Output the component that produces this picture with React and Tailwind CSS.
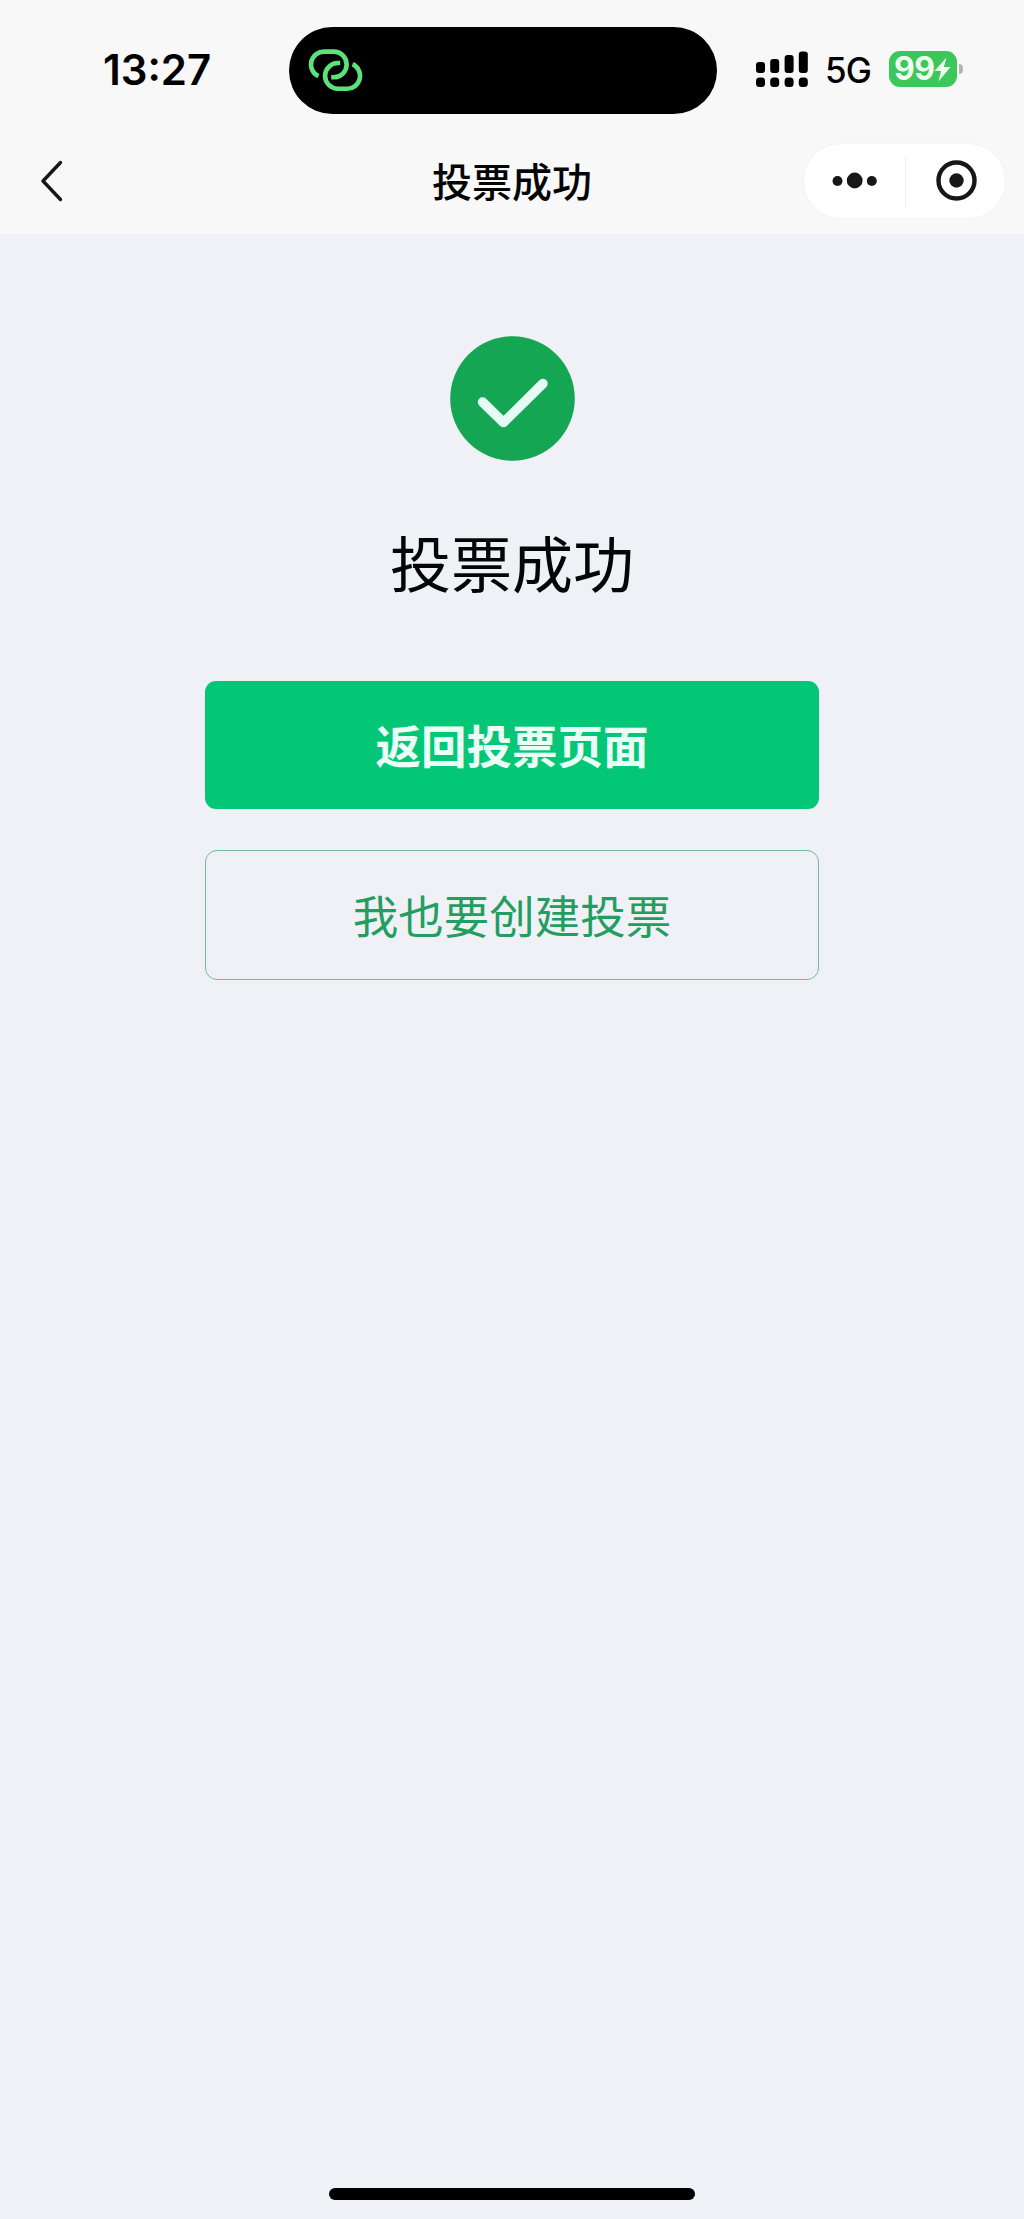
function LinkIcon() {
  return (
    <svg className="mb-[3px] ml-[15px] h-[50px] w-[60px]" viewBox="0 0 60 50" fill="none" stroke="#5ce27b" strokeWidth="4.6">
      <path d="M14.5 32.2A12.9 12.9 0 0 1 20.2 7.6H29.8A12.85 12.85 0 0 1 29.8 33.3H27.2" />
      <path d="M36.2 19H33.9A12.85 12.85 0 0 0 33.9 44.7H42.8A12.85 12.85 0 0 0 48.6 20.2" />
    </svg>
  );
}

function SignalIcon() {
  return (
    <svg className="h-9 w-[53px]" viewBox="0 0 53 36" fill="#000">
      <rect x="0" y="11" width="9" height="11" rx="3" />
      <rect x="14.2" y="8" width="9" height="14" rx="3" />
      <rect x="28.6" y="4" width="9" height="18" rx="3" />
      <rect x="42.8" y="0.5" width="9" height="21.5" rx="3" />
      <rect x="0" y="26.5" width="9" height="9.5" rx="3.5" />
      <rect x="14.2" y="26.5" width="9" height="9.5" rx="3.5" />
      <rect x="28.6" y="26.5" width="9" height="9.5" rx="3.5" />
      <rect x="42.8" y="26.5" width="9" height="9.5" rx="3.5" />
    </svg>
  );
}

function StatusBar() {
  return (
    <div className="flex h-[141px] items-start font-['Inter',sans-serif] text-black">
      <div className="mt-[44px] ml-[103px] w-[186px] text-[42px] leading-[52px] font-semibold whitespace-nowrap">
        <span className="inline-block">13:27</span>
      </div>
      <div className="mt-[27px] flex h-[87px] w-[428px] items-center rounded-full bg-black">
        <LinkIcon />
      </div>
      <div className="mt-[51px] ml-[39px] flex h-9 items-center">
        <SignalIcon />
        <span className="mt-px ml-[16px] w-[64px] text-[35px] leading-9 font-medium tracking-[-1px]">5G</span>
        <div className="flex h-9 w-[68px] items-center rounded-[11px] bg-[#3bc759] pl-[5px] text-[#effff0]">
          <span className="text-[32px] leading-9 font-bold tracking-[-0.5px]">99</span>
          <svg className="-ml-px h-[27px] w-[17px] shrink-0" viewBox="0 0 17 27" fill="currentColor">
            <path d="M12.5 1.5L0.5 15H7L4.5 25.5L16.5 11H9.8Z" />
          </svg>
        </div>
        <div className="ml-[2px] h-[10px] w-1 rounded-r-full bg-[#b5b5b5]" />
      </div>
    </div>
  );
}

function NavBar() {
  return (
    <div className="grid h-[93px] grid-cols-[1fr_auto_1fr] items-start">
      <svg className="mt-[18px] ml-[39px] h-11 w-7" viewBox="0 0 28 44" fill="none" stroke="#171717" strokeWidth="3.4" strokeLinecap="round" strokeLinejoin="round">
        <path d="M21.5 3.5L4 22L21.5 40.5" />
      </svg>
      <h1 className="mt-[9px] text-[40px] leading-[60px] font-medium">投票成功</h1>
      <div className="mt-[2px] mr-[18px] flex h-[76px] w-[203px] items-center justify-self-end rounded-full border border-[#f4f4f4] bg-white">
        <svg className="h-10 w-[101px]" viewBox="0 0 101 40" fill="#171717">
          <circle cx="33.5" cy="20" r="5" />
          <circle cx="50.7" cy="19.5" r="7.9" />
          <circle cx="67.8" cy="20" r="5" />
        </svg>
        <div className="h-[52px] w-px bg-[#ededed]" />
        <svg className="h-[42px] w-[99px]" viewBox="0 0 99 42" fill="none">
          <circle cx="50.5" cy="20.5" r="18" stroke="#171717" strokeWidth="4.4" />
          <circle cx="50.5" cy="20.5" r="7.2" fill="#171717" />
        </svg>
      </div>
    </div>
  );
}

export default function App() {
  return (
    <div className="flex h-[2219px] w-[1024px] flex-col bg-[#eff1f6] font-['Noto_Sans_CJK_SC',sans-serif] text-[#050505]">
      <header className="h-[234px] bg-[#f8f8f8]">
        <StatusBar />
        <NavBar />
      </header>
      <main className="flex flex-1 flex-col items-center pt-[102px]">
        <svg className="h-[125px] w-[125px]" viewBox="0 0 125 125" fill="none">
          <circle cx="62.5" cy="62.5" r="62.3" fill="#15a653" />
          <path d="M32.5 66L53.5 86.5L93 47.5" stroke="#e6fbf3" strokeWidth="9.5" strokeLinecap="round" strokeLinejoin="round" />
        </svg>
        <h2 className="mt-[56px] text-[61px] leading-[90px] font-normal">投票成功</h2>
        <div className="mt-[74px] flex w-[614px] flex-col gap-[41px]">
          <button className="flex h-[128px] items-center justify-center rounded-[11px] bg-[#03c777] pb-px text-[45.5px] leading-none font-bold text-[#eafff6]">
            返回投票页面
          </button>
          <button className="flex h-[130px] items-center justify-center rounded-[12px] border-[1.5px] border-[#75b996] text-[45.5px] leading-none text-[#249e60]">
            我也要创建投票
          </button>
        </div>
      </main>
      <div className="mb-[19px] ml-[329px] h-3 w-[366px] rounded-full bg-black" />
    </div>
  );
}
